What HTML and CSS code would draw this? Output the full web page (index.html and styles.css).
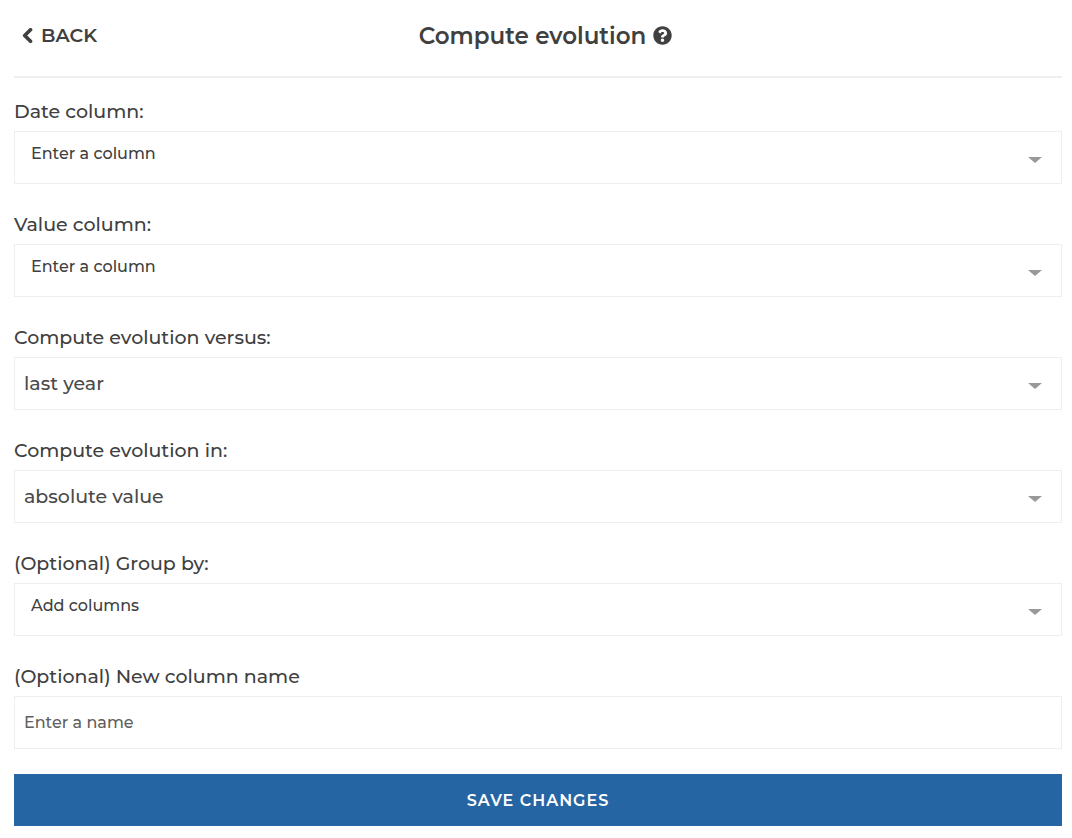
FILE: index.html
```html
<!DOCTYPE html>
<html lang="en">
<head>
<meta charset="utf-8">
<meta name="viewport" content="width=device-width, initial-scale=1">
<title>Compute evolution</title>
<link rel="stylesheet" href="styles.css">
</head>
<body>
<form class="step-form">
  <header class="step-header">
    <button class="back" type="button">
      <svg class="back-icon" viewBox="0 0 12 16" aria-hidden="true"><path d="M8.500 1.800 2.700 7.500l5.800 5.700" fill="none" stroke="currentColor" stroke-width="3.700" stroke-linecap="round" stroke-linejoin="round"/></svg>
      BACK
    </button>
    <h1 class="title">
      Compute evolution
      <a class="help" href="#help" aria-label="Help">
        <svg class="help-icon" viewBox="0 0 512 512" aria-hidden="true"><path fill="currentColor" d="M504 256c0 137-111 248-248 248S8 393 8 256C8 119.100 119 8 256 8s248 111.100 248 248zM262.700 90c-54.500 0-89.300 23-116.500 63.800-3.500 5.300-2.400 12.400 2.700 16.300l34.700 26.300c5.200 3.900 12.600 3 16.700-2.100 17.900-22.700 30.100-35.800 57.300-35.800 20.400 0 45.700 13.100 45.700 33 0 15-12.400 22.700-32.500 34C247.100 238.500 216 254.900 216 296v4c0 6.600 5.400 12 12 12h56c6.600 0 12-5.400 12-12v-1.300c0-28.500 83.200-29.600 83.200-106.700 0-58-60.200-102-116.500-102zM256 338c-25.400 0-46 20.600-46 46s20.600 46 46 46 46-20.600 46-46-20.600-46-46-46z"/></svg>
      </a>
    </h1>
  </header>

  <div class="fields">
    <div class="field">
      <label class="label" for="date">Date column:</label>
      <div class="picker">
        <select class="control control-column" id="date"><option>Enter a column</option></select>
      </div>
    </div>
    <div class="field">
      <label class="label" for="value">Value column:</label>
      <div class="picker">
        <select class="control control-column" id="value"><option>Enter a column</option></select>
      </div>
    </div>
    <div class="field">
      <label class="label" for="versus">Compute evolution versus:</label>
      <div class="picker">
        <select class="control" id="versus"><option>last year</option></select>
      </div>
    </div>
    <div class="field">
      <label class="label" for="format">Compute evolution in:</label>
      <div class="picker">
        <select class="control" id="format"><option>absolute value</option></select>
      </div>
    </div>
    <div class="field">
      <label class="label" for="group">(Optional) Group by:</label>
      <div class="picker">
        <select class="control control-column" id="group"><option>Add columns</option></select>
      </div>
    </div>
    <div class="field">
      <label class="label" for="name">(Optional) New column name</label>
      <input class="control control-text" id="name" type="text" placeholder="Enter a name">
    </div>
  </div>

  <button class="save" type="submit">SAVE CHANGES</button>
</form>
</body>
</html>
```

FILE: styles.css
```css
* {
  box-sizing: border-box;
}

body {
  margin: 0;
  background: #fff;
  color: #404040;
  font-family: Montserrat, Inter, "Open Sans", sans-serif;
  font-weight: 500;
}

.step-form {
  padding: 0 10px 12px 14px;
}

.step-header {
  display: flex;
  align-items: center;
  height: 78px;
  padding: 0 0 4px 8px;
  border-bottom: 2px solid #eee;
}

.back {
  display: flex;
  align-items: center;
  gap: 7px;
  padding: 0;
  border: 0;
  background: none;
  color: inherit;
  font: inherit;
  font-size: 19px;
  font-weight: 600;
  line-height: 24px;
}

.back-icon {
  width: 12px;
  height: 16px;
}

.title {
  display: flex;
  flex: 1;
  align-items: center;
  justify-content: center;
  gap: 7px;
  margin: 0;
  padding-right: 68px;
  font-size: 23px;
  font-weight: 600;
  line-height: 32px;
}

.help {
  display: flex;
  padding-bottom: 2px;
  color: inherit;
}

.help-icon {
  width: 19px;
  height: 19px;
}

.fields {
  display: flex;
  flex-direction: column;
  gap: 29px;
  padding: 22px 0 25px;
}

.field {
  display: flex;
  flex-direction: column;
  gap: 7px;
}

.label {
  font-size: 19px;
  line-height: 24px;
}

.picker {
  position: relative;
}

.picker::after {
  content: "";
  position: absolute;
  top: 26px;
  right: 20px;
  border: solid transparent;
  border-width: 6px 7px 0;
  border-top-color: #999;
  pointer-events: none;
}

.control {
  display: block;
  width: 100%;
  height: 53px;
  margin: 0;
  padding: 0 48px 0 9px;
  border: 1px solid #eee;
  border-radius: 0;
  background: #fff;
  color: #4a4a4a;
  font: inherit;
  font-size: 19px;
  appearance: none;
}

.control-column {
  padding: 0 48px 8px 16px;
  color: #404040;
  font-size: 16px;
}

.control-text {
  font-size: 16px;
}

.control-text::placeholder {
  color: #606060;
  opacity: 1;
}

.save {
  display: block;
  width: 100%;
  height: 52px;
  border: 0;
  background: #2665a3;
  color: #fff;
  font: inherit;
  font-size: 16px;
  font-weight: 600;
  letter-spacing: 1px;
}
```
